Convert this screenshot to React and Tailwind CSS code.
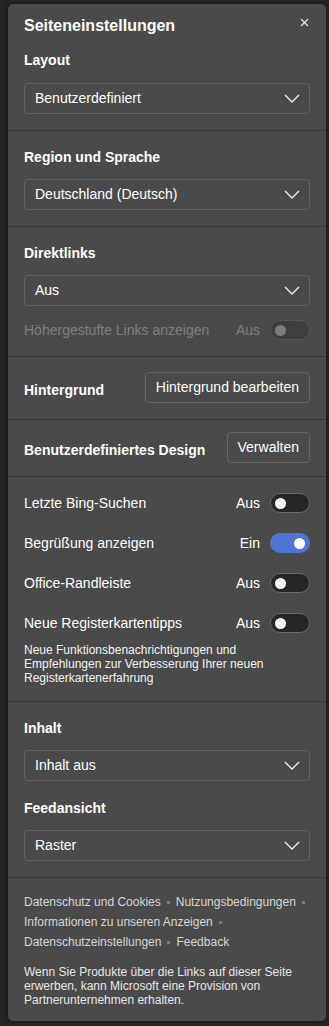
import React from "react";

const Chevron = () => (
  <svg width="16" height="9" viewBox="0 0 16 9" fill="none" className="shrink-0">
    <polyline points="1,1 8,8 15,1" stroke="#f2f2f2" strokeWidth="1.3" fill="none" />
  </svg>
);

const Select = ({ value }) => (
  <div className="flex h-[31px] items-center justify-between rounded-[4px] border border-[#616161] pl-[10px] pr-[9px] text-[14px] text-white">
    <span>{value}</span>
    <Chevron />
  </div>
);

const Toggle = ({ on, disabled }) => {
  if (disabled) {
    return (
      <div className="flex h-5 w-10 shrink-0 items-center rounded-full border border-[#555555] bg-[#3e3e3e] pl-[4px]">
        <div className="h-[11px] w-[11px] rounded-full bg-[#7b7b7b]" />
      </div>
    );
  }
  if (on) {
    return (
      <div className="flex h-5 w-10 shrink-0 items-center justify-end rounded-full bg-[#4e74d4] pr-[5px]">
        <div className="h-[11px] w-[11px] rounded-full bg-white" />
      </div>
    );
  }
  return (
    <div className="flex h-5 w-10 shrink-0 items-center rounded-full border border-[#6a6a6a] bg-[#262626] pl-[4px]">
      <div className="h-[11px] w-[11px] rounded-full bg-white" />
    </div>
  );
};

const ToggleRow = ({ label, on }) => (
  <div className="flex h-5 items-center justify-between text-[14px] text-white">
    <span>{label}</span>
    <div className="flex items-center gap-[10px]">
      <span>{on ? "Ein" : "Aus"}</span>
      <Toggle on={on} />
    </div>
  </div>
);

const Label = ({ children }) => (
  <div className="h-5 text-[14px] font-bold leading-5 text-white">{children}</div>
);

const Dot = () => (
  <span className="mx-[6px] inline-block h-[3px] w-[3px] shrink-0 bg-[#7a7a7a]" />
);

export default function App() {
  return (
    <div
      className="min-h-screen bg-[#262626] pl-2 pt-1"
      style={{ fontFamily: '"Liberation Sans", Arial, sans-serif' }}
    >
      <div className="w-[318px] rounded-[5px] bg-[#4a4a4a] shadow-[0_0_6px_rgba(0,0,0,0.5)]">
        {/* Header + Layout */}
        <div className="border-b border-[#383838] px-4 pb-4 pt-3">
          <div className="flex items-start justify-between">
            <h1 className="text-[16px] font-bold leading-5 text-white">Seiteneinstellungen</h1>
            <svg width="9" height="9" viewBox="0 0 9 9" className="mr-[1px] mt-[2px]">
              <path d="M1 1 L8 8 M8 1 L1 8" stroke="#e6e6e6" strokeWidth="1.1" />
            </svg>
          </div>
          <div className="mt-[14px]">
            <Label>Layout</Label>
          </div>
          <div className="mt-[13px]">
            <Select value="Benutzerdefiniert" />
          </div>
        </div>

        {/* Region */}
        <div className="border-b border-[#383838] px-4 pb-4 pt-4">
          <Label>Region und Sprache</Label>
          <div className="mt-3">
            <Select value="Deutschland (Deutsch)" />
          </div>
        </div>

        {/* Direktlinks */}
        <div className="border-b border-[#383838] px-4 pb-4 pt-4">
          <Label>Direktlinks</Label>
          <div className="mt-3">
            <Select value="Aus" />
          </div>
          <div className="mt-[14px] flex h-5 items-center justify-between text-[14px] text-[#7e7e7e]">
            <span>Höhergestufte Links anzeigen</span>
            <div className="flex items-center gap-[10px]">
              <span>Aus</span>
              <Toggle disabled />
            </div>
          </div>
        </div>

        {/* Hintergrund */}
        <div className="flex items-center justify-between border-b border-[#383838] px-4 pb-4 pt-[15px]">
          <span className="mt-[5px] text-[14px] font-bold text-white">Hintergrund</span>
          <button className="h-[31px] rounded-[4px] border border-[#666666] px-[10px] text-[14px] text-white">
            Hintergrund bearbeiten
          </button>
        </div>

        {/* Design */}
        <div className="flex items-center justify-between border-b border-[#383838] px-4 pb-[13px] pt-3">
          <span className="mt-[5px] text-[14px] font-bold text-white">Benutzerdefiniertes Design</span>
          <button className="h-[31px] rounded-[4px] border border-[#666666] px-[10px] text-[14px] text-white">
            Verwalten
          </button>
        </div>

        {/* Toggles */}
        <div className="border-b border-[#383838] px-4 pb-4 pt-4">
          <div className="flex flex-col gap-5">
            <ToggleRow label="Letzte Bing-Suchen" />
            <ToggleRow label="Begrüßung anzeigen" on />
            <ToggleRow label="Office-Randleiste" />
            <ToggleRow label="Neue Registerkartentipps" />
          </div>
          <p className="mt-[10px] text-[12px] leading-[14px] text-[#f2f2f2]">
            Neue Funktionsbenachrichtigungen und Empfehlungen zur Verbesserung Ihrer neuen
            Registerkartenerfahrung
          </p>
        </div>

        {/* Inhalt */}
        <div className="border-b border-[#383838] px-4 pb-4 pt-4">
          <Label>Inhalt</Label>
          <div className="mt-3">
            <Select value="Inhalt aus" />
          </div>
          <div className="mt-[17px]">
            <Label>Feedansicht</Label>
          </div>
          <div className="mt-3">
            <Select value="Raster" />
          </div>
        </div>

        {/* Footer */}
        <div className="px-4 pb-[14px] pt-[14px] text-[12px] text-[#d6d6d6]">
          <div className="whitespace-nowrap leading-5">
            <div className="flex items-center">
              <span>Datenschutz und Cookies</span>
              <Dot />
              <span>Nutzungsbedingungen</span>
              <Dot />
            </div>
            <div className="flex items-center">
              <span>Informationen zu unseren Anzeigen</span>
              <Dot />
            </div>
            <div className="flex items-center">
              <span>Datenschutzeinstellungen</span>
              <Dot />
              <span>Feedback</span>
            </div>
          </div>
          <p className="mt-[13px] leading-[14px] text-[#e6e6e6]">
            Wenn Sie Produkte über die Links auf dieser Seite erwerben, kann Microsoft eine
            Provision von Partnerunternehmen erhalten.
          </p>
        </div>
      </div>
    </div>
  );
}
